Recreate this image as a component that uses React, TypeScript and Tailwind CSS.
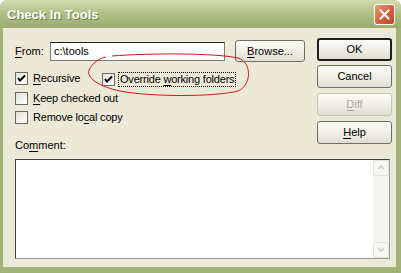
import { useState } from "react";

function Hot({ text, hot }: { text: string; hot: number }) {
  if (hot < 0) return <>{text}</>;
  return (
    <>
      {text.slice(0, hot)}
      <span className="underline underline-offset-2">{text.slice(hot, hot + 1)}</span>
      {text.slice(hot + 1)}
    </>
  );
}

function XpButton({ label, hot, primary, disabled }: { label: string; hot: number; primary?: boolean; disabled?: boolean }) {
  return (
    <button
      className={
        "flex h-[23px] w-[75px] items-center justify-center rounded-[3px] bg-gradient-to-b from-[#fbfbf8] via-[#f1efe6] to-[#e0ddd0] text-[11px] " +
        (primary
          ? "border-2 border-[#1e1e1e] text-black"
          : disabled
            ? "border border-[#c9c7ba] text-[#aca899]"
            : "border border-[#6f6f66] text-black")
      }
    >
      <Hot text={label} hot={hot} />
    </button>
  );
}

function CheckBox({ label, hot, checked, focused }: { label: string; hot: number; checked?: boolean; focused?: boolean }) {
  return (
    <div className="flex h-[19px] items-center gap-[4px]">
      <div className="flex h-[13px] w-[13px] items-center justify-center border border-[#6a6a62] bg-gradient-to-br from-[#e3e1d8] to-white">
        {checked && (
          <svg width="9" height="9" viewBox="0 0 9 9">
            <path d="M1 4 L3 6.5 L8 1.5" fill="none" stroke="#000" strokeWidth="2" />
          </svg>
        )}
      </div>
      <span className={"px-[1px] text-[11px] leading-[13px] tracking-[-0.2px] " + (focused ? "outline outline-1 outline-dotted outline-black" : "")}>
        <Hot text={label} hot={hot} />
      </span>
    </div>
  );
}

export default function App() {
  const [path, setPath] = useState("c:\\tools");

  return (
    <div className="relative h-[273px] w-[401px] overflow-hidden bg-white font-['Liberation_Sans',Arial,sans-serif] text-black">
      <div className="flex h-full w-full flex-col rounded-t-[7px] bg-[#a2b378]">
        {/* title bar */}
        <div className="flex h-[28px] items-center justify-between rounded-t-[7px] bg-gradient-to-b from-[#d3ddb0] via-[#aebe84] to-[#9aad6e] pl-[7px] pr-[6px]">
          <span className="pt-[2px] text-[13px] font-bold text-white [text-shadow:1px_1px_0_#6f7e4c]">Check In Tools</span>
          <div className="flex h-[21px] w-[21px] items-center justify-center rounded-[3px] border border-white bg-gradient-to-br from-[#e99a7c] via-[#d4603f] to-[#c24a2c]">
            <svg width="11" height="11" viewBox="0 0 11 11">
              <path d="M1.5 1.5 L9.5 9.5 M9.5 1.5 L1.5 9.5" stroke="#fff" strokeWidth="2" strokeLinecap="square" />
            </svg>
          </div>
        </div>

        {/* body */}
        <div className="ml-[3px] mr-[5px] mb-[6px] flex flex-1 flex-col bg-[#ece9d8] pl-[12px] pr-[4px] pt-[10px]">
          <div className="flex">
            <div className="flex flex-1 flex-col">
              <div className="mt-[3px] flex h-[20px] items-center">
                <span className="w-[35px] text-[11px]">
                  <Hot text="From:" hot={0} />
                </span>
                <input
                  value={path}
                  onChange={(e) => setPath(e.target.value)}
                  className="h-[19px] w-[175px] border border-[#7a7a74] border-t-[#1f1f1f] bg-white px-[3px] text-[11px] outline-none"
                />
                <div className="ml-[10px]">
                  <button className="flex h-[22px] w-[70px] items-center justify-center rounded-[3px] border border-[#6f6f66] bg-gradient-to-b from-[#fbfbf8] via-[#f1efe6] to-[#e0ddd0] text-[11px]">
                    <Hot text="Browse..." hot={0} />
                  </button>
                </div>
              </div>

              <div className="mt-[8px] flex">
                <div className="w-[87px]">
                  <CheckBox label="Recursive" hot={0} checked />
                </div>
                <div className="mt-[1px]">
                  <CheckBox label="Override working folders" hot={9} checked focused />
                </div>
              </div>
              <CheckBox label="Keep checked out" hot={0} />
              <CheckBox label="Remove local copy" hot={9} />

              <div className="mt-[10px] text-[11px]">
                <Hot text="Comment:" hot={2} />
              </div>
            </div>

            <div className="flex flex-col gap-[4px]">
              <XpButton label="OK" hot={-1} primary />
              <XpButton label="Cancel" hot={-1} />
              <div className="mt-[1px]">
                <XpButton label="Diff" hot={0} disabled />
              </div>
              <div className="mt-[1px]">
                <XpButton label="Help" hot={0} />
              </div>
            </div>
          </div>

          {/* comment box */}
          <div className="mt-[5px] flex h-[100px] w-[375px] border border-[#9d9d95] border-l-[#404040] border-t-[#404040] bg-white">
            <textarea className="flex-1 resize-none bg-white outline-none" />
            <div className="flex w-[16px] flex-col justify-between bg-[#f5f4ef]">
              <div className="flex h-[16px] items-center justify-center rounded-[2px] border border-[#e5e3da] bg-[#f7f6f1]">
                <svg width="8" height="5" viewBox="0 0 8 5">
                  <path d="M1 4 L4 1 L7 4" fill="none" stroke="#cdcbc0" strokeWidth="1.5" />
                </svg>
              </div>
              <div className="flex h-[16px] items-center justify-center rounded-[2px] border border-[#e5e3da] bg-[#f7f6f1]">
                <svg width="8" height="5" viewBox="0 0 8 5">
                  <path d="M1 1 L4 4 L7 1" fill="none" stroke="#cdcbc0" strokeWidth="1.5" />
                </svg>
              </div>
            </div>
          </div>
        </div>
      </div>

      {/* hand-drawn red loop */}
      <svg className="pointer-events-none absolute inset-0" width="401" height="273" viewBox="0 0 401 273">
        <path
          d="M112 56 C150 53 215 53 238 58 C252 62 252 85 238 91 C215 97 150 97 120 91 C100 87 86 78 89 70 C92 63 100 58 106 57"
          fill="none"
          stroke="#d01818"
          strokeWidth="1"
        />
      </svg>
    </div>
  );
}
